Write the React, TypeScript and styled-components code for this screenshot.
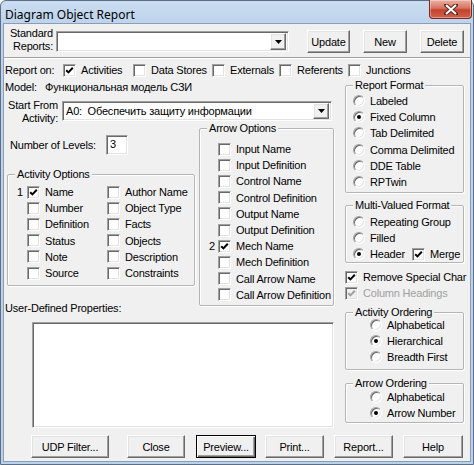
import React from "react";
import styled, { createGlobalStyle, css } from "styled-components";

const GlobalStyle = createGlobalStyle`
  body {
    margin: 0;
    background: #ffffff;
  }
  * {
    box-sizing: border-box;
  }
`;

const sunken = css`
  background: #ffffff;
  border: 1px solid;
  border-color: #a0a0a0 #ffffff #ffffff #a0a0a0;
  box-shadow: inset 1px 1px 0 #696969, inset -1px -1px 0 #e3e3e3;
`;

const raised = css`
  background: #f0f0f0;
  border: 1px solid;
  border-color: #ffffff #696969 #696969 #ffffff;
  box-shadow: inset -1px -1px 0 #a0a0a0, inset 1px 1px 0 #e3e3e3;
`;

const Window = styled.div`
  width: 474px;
  height: 465px;
  display: flex;
  flex-direction: column;
  padding: 0 3px 3px;
  border: 1px solid #5d6f86;
  border-radius: 6px 6px 0 0;
  background: linear-gradient(#cadcf0 0, #bdd3ec 24px, #b9d1ea 100%);
  font-family: "Liberation Sans", Arial, sans-serif;
  font-size: 11px;
  letter-spacing: -0.2px;
  color: #000000;
`;

const TitleBar = styled.div`
  height: 23px;
  display: flex;
  align-items: flex-start;
  justify-content: space-between;
`;

const Title = styled.div`
  padding: 5px 0 0 1px;
  font-family: "Noto Sans", "Liberation Sans", sans-serif;
  font-size: 12px;
  letter-spacing: 0;
`;

const CloseButton = styled.div`
  width: 43px;
  height: 19px;
  margin: -1px -2px 0 0;
  display: flex;
  align-items: center;
  justify-content: center;
  border: 1px solid #7a2a1f;
  border-top: none;
  border-radius: 0 0 4px 4px;
  background: linear-gradient(#eab0a4 0%, #d9735f 45%, #c4432d 55%, #d0624a 100%);
  box-shadow: inset 0 0 0 1px rgba(255, 255, 255, 0.35);
`;

const Client = styled.div`
  flex: 1;
  display: flex;
  flex-direction: column;
  background: #f0f0f0;
  box-shadow: 0 0 0 1px #8a9db5;
`;

const TopRow = styled.div`
  margin-top: 6px;
  height: 24px;
  display: flex;
  align-items: flex-start;
`;

const StackLabel = styled.div<{ $w: number }>`
  width: ${(p) => p.$w}px;
  text-align: right;
  line-height: 13px;
  margin-top: -3px;
`;

const Combo = styled.div<{ $w: number; $h: number }>`
  ${sunken};
  width: ${(p) => p.$w}px;
  height: ${(p) => p.$h}px;
  display: flex;
  align-items: center;
  justify-content: space-between;
  padding: 1px 2px 1px 3px;
  white-space: pre;
`;

const DropButton = styled.div`
  ${raised};
  width: 16px;
  height: 100%;
  display: flex;
  align-items: center;
  justify-content: center;
`;

const Button = styled.div<{ $w: number; $ml: number; $default?: boolean }>`
  ${raised};
  width: ${(p) => p.$w}px;
  height: 23px;
  margin-left: ${(p) => p.$ml}px;
  display: flex;
  align-items: center;
  justify-content: center;
  ${(p) =>
    p.$default &&
    css`
      border: 1px solid #000000;
      box-shadow: inset 1px 1px 0 #ffffff, inset -1px -1px 0 #696969,
        inset -2px -2px 0 #a0a0a0;
    `}
`;

const Separator = styled.div`
  margin-top: 3px;
  height: 2px;
  border-top: 1px solid #a0a0a0;
  border-bottom: 1px solid #ffffff;
`;

const ReportOnRow = styled.div`
  margin-top: 4px;
  height: 14px;
  display: flex;
  align-items: center;
`;

const RowLabel = styled.div<{ $w: number }>`
  width: ${(p) => p.$w}px;
  padding-left: 1px;
`;

const Item = styled.div<{ $w?: number; $disabled?: boolean }>`
  ${(p) => (p.$w ? `width: ${p.$w}px;` : "")}
  display: flex;
  align-items: center;
  white-space: nowrap;
  color: ${(p) => (p.$disabled ? "#a0a0a0" : "#000000")};
`;

const Mark = styled.span<{ $w: number }>`
  width: ${(p) => p.$w}px;
  flex: none;
`;

const Box = styled.span<{ $disabled?: boolean }>`
  ${sunken};
  width: 13px;
  height: 13px;
  flex: none;
  margin-right: 5px;
  display: flex;
  align-items: center;
  justify-content: center;
  ${(p) => p.$disabled && "background: #f0f0f0;"}
`;

const Round = styled.span`
  width: 12px;
  height: 12px;
  flex: none;
  margin-right: 5px;
  border-radius: 50%;
  border: 1px solid;
  border-color: #a0a0a0 #ffffff #ffffff #a0a0a0;
  background: #ffffff;
  box-shadow: inset 1px 1px 0 #696969, inset -1px -1px 0 #e3e3e3;
  display: flex;
  align-items: center;
  justify-content: center;
`;

const Dot = styled.span`
  width: 4px;
  height: 4px;
  border-radius: 50%;
  background: #000000;
`;

const Middle = styled.div`
  margin-top: 1px;
  display: grid;
  grid-template-columns: 341px 119px;
`;

const Column = styled.div`
  display: flex;
  flex-direction: column;
`;

const ModelRow = styled.div`
  margin-top: 2px;
  height: 13px;
  display: flex;
  align-items: center;
`;

const StartRow = styled.div`
  margin-top: 6px;
  height: 22px;
  display: flex;
  align-items: flex-start;
`;

const SubGrid = styled.div`
  margin-top: 1px;
  display: grid;
  grid-template-columns: 195px 135px;
  align-items: start;
`;

const LevelsRow = styled.div`
  margin-top: 13px;
  height: 20px;
  display: flex;
  align-items: center;
`;

const LevelsLabel = styled.div`
  width: 102px;
  padding-left: 6px;
`;

const NumberBox = styled.div`
  ${sunken};
  width: 22px;
  height: 20px;
  padding: 2px 0 0 3px;
`;

const Group = styled.div<{ $mt: number; $ml?: number; $w?: number; $h: number }>`
  position: relative;
  margin-top: ${(p) => p.$mt}px;
  margin-left: ${(p) => p.$ml ?? 0}px;
  width: ${(p) => (p.$w ? `${p.$w}px` : "auto")};
  height: ${(p) => p.$h}px;
  border: 1px solid #b5b5b5;
  border-radius: 2px;
  box-shadow: inset 1px 1px 0 #ffffff, 1px 1px 0 #ffffff;
`;

const Caption = styled.span`
  position: absolute;
  top: -7px;
  left: 7px;
  padding: 0 2px;
  line-height: 13px;
  background: #f0f0f0;
  white-space: nowrap;
`;

const Options = styled.div<{ $pt: number; $pl: number; $cols?: string }>`
  display: grid;
  grid-template-columns: ${(p) => p.$cols ?? "1fr"};
  grid-auto-rows: 16.2px;
  align-items: center;
  padding: ${(p) => p.$pt}px 0 0 ${(p) => p.$pl}px;
`;

const UdpLabel = styled.div`
  margin-top: 16px;
  padding-left: 1px;
  line-height: 13px;
`;

const PropsBox = styled.div`
  ${sunken};
  margin: 7px 0 0 28px;
  width: 302px;
  height: 106px;
`;

const PlainRow = styled.div<{ $mt: number }>`
  margin-top: ${(p) => p.$mt}px;
  height: 14px;
  display: flex;
  align-items: center;
`;

const ButtonRow = styled.div`
  margin-top: 7px;
  display: flex;
`;

function Tick({ color = "#000000" }: { color?: string }) {
  return (
    <svg width="9" height="9" viewBox="0 0 9 9">
      <polyline points="1.2,4.2 3.4,6.4 7.8,1.8" fill="none" stroke={color} strokeWidth="2" />
    </svg>
  );
}

function Check({ label, checked, mark, markW = 0, w, disabled }: {
  label: string;
  checked?: boolean;
  mark?: string;
  markW?: number;
  w?: number;
  disabled?: boolean;
}) {
  return (
    <Item $w={w} $disabled={disabled}>
      {markW > 0 && <Mark $w={markW}>{mark}</Mark>}
      <Box $disabled={disabled}>{checked && <Tick color={disabled ? "#a0a0a0" : "#000000"} />}</Box>
      {label}
    </Item>
  );
}

function Radio({ label, on, w }: { label: string; on?: boolean; w?: number }) {
  return (
    <Item $w={w}>
      <Round>{on && <Dot />}</Round>
      {label}
    </Item>
  );
}

function Arrow() {
  return (
    <svg width="7" height="4" viewBox="0 0 7 4">
      <polygon points="0,0 7,0 3.5,4" fill="#000000" />
    </svg>
  );
}

const activityLeft = ["Name", "Number", "Definition", "Status", "Note", "Source"];
const activityRight = ["Author Name", "Object Type", "Facts", "Objects", "Description", "Constraints"];
const arrowOptions = [
  "Input Name",
  "Input Definition",
  "Control Name",
  "Control Definition",
  "Output Name",
  "Output Definition",
  "Mech Name",
  "Mech Definition",
  "Call Arrow Name",
  "Call Arrow Definition",
];
const formats = ["Labeled", "Fixed Column", "Tab Delimited", "Comma Delimited", "DDE Table", "RPTwin"];

export default function App() {
  return (
    <>
      <GlobalStyle />
      <Window>
        <TitleBar>
          <Title>Diagram Object Report</Title>
          <CloseButton>
            <svg width="14" height="11" viewBox="0 0 14 11">
              <path
                d="M2 1 L12 10 M12 1 L2 10"
                stroke="#5a2a22"
                strokeWidth="4"
                strokeLinecap="square"
              />
              <path d="M2 1 L12 10 M12 1 L2 10" stroke="#ffffff" strokeWidth="2" />
            </svg>
          </CloseButton>
        </TitleBar>
        <Client>
          <TopRow>
            <StackLabel $w={49}>
              Standard
              <br />
              Reports:
            </StackLabel>
            <Combo $w={233} $h={21} style={{ marginLeft: 3, marginTop: 1 }}>
              <span />
              <DropButton>
                <Arrow />
              </DropButton>
            </Combo>
            <Button $w={43} $ml={18}>Update</Button>
            <Button $w={44} $ml={13}>New</Button>
            <Button $w={44} $ml={13}>Delete</Button>
          </TopRow>
          <Separator />
          <ReportOnRow>
            <RowLabel $w={59}>Report on:</RowLabel>
            <Check label="Activities" checked w={70} />
            <Check label="Data Stores" w={79} />
            <Check label="Externals" w={67} />
            <Check label="Referents" w={69} />
            <Check label="Junctions" />
          </ReportOnRow>
          <Middle>
            <Column>
              <ModelRow>
                <RowLabel $w={41}>Model:</RowLabel>
                <span>Функциональная модель СЗИ</span>
              </ModelRow>
              <StartRow>
                <StackLabel $w={54} style={{ marginTop: 0 }}>
                  Start From
                  <br />
                  Activity:
                </StackLabel>
                <Combo $w={270} $h={20} style={{ marginLeft: 4, marginTop: 2 }}>
                  <span>A0:  Обеспечить защиту информации</span>
                  <DropButton>
                    <Arrow />
                  </DropButton>
                </Combo>
              </StartRow>
              <SubGrid>
                <Column>
                  <LevelsRow>
                    <LevelsLabel>Number of Levels:</LevelsLabel>
                    <NumberBox>3</NumberBox>
                  </LevelsRow>
                  <Group $mt={19} $ml={3} $w={188} $h={112}>
                    <Caption>Activity Options</Caption>
                    <Options $pt={9} $pl={9} $cols="80px 80px">
                      {activityLeft.map((l, i) => (
                        <React.Fragment key={l}>
                          <Check label={l} checked={i === 0} mark={i === 0 ? "1" : ""} markW={10} />
                          <Check label={activityRight[i]} markW={10} />
                        </React.Fragment>
                      ))}
                    </Options>
                  </Group>
                  <UdpLabel>User-Defined Properties:</UdpLabel>
                </Column>
                <Group $mt={6} $w={135} $h={178}>
                  <Caption>Arrow Options</Caption>
                  <Options $pt={12} $pl={9}>
                    {arrowOptions.map((l) => (
                      <Check
                        key={l}
                        label={l}
                        checked={l === "Mech Name"}
                        mark={l === "Mech Name" ? "2" : ""}
                        markW={9}
                      />
                    ))}
                  </Options>
                </Group>
              </SubGrid>
              <PropsBox />
            </Column>
            <Column>
              <Group $mt={7} $h={108}>
                <Caption>Report Format</Caption>
                <Options $pt={7} $pl={7}>
                  {formats.map((f) => (
                    <Radio key={f} label={f} on={f === "Fixed Column"} />
                  ))}
                </Options>
              </Group>
              <Group $mt={12} $h={58}>
                <Caption>Multi-Valued Format</Caption>
                <Options $pt={8} $pl={7}>
                  <Radio label="Repeating Group" />
                  <Radio label="Filled" />
                  <Item>
                    <Radio label="Header" on w={59} />
                    <Check label="Merge" checked />
                  </Item>
                </Options>
              </Group>
              <PlainRow $mt={7}>
                <Check label="Remove Special Char" checked />
              </PlainRow>
              <PlainRow $mt={2}>
                <Check label="Column Headings" checked disabled />
              </PlainRow>
              <Group $mt={12} $h={58}>
                <Caption>Activity Ordering</Caption>
                <Options $pt={4} $pl={24}>
                  <Radio label="Alphabetical" />
                  <Radio label="Hierarchical" on />
                  <Radio label="Breadth First" />
                </Options>
              </Group>
              <Group $mt={13} $h={40}>
                <Caption>Arrow Ordering</Caption>
                <Options $pt={5} $pl={24}>
                  <Radio label="Alphabetical" />
                  <Radio label="Arrow Number" on />
                </Options>
              </Group>
            </Column>
          </Middle>
          <ButtonRow>
            <Button $w={78} $ml={27}>UDP Filter...</Button>
            <Button $w={58} $ml={18}>Close</Button>
            <Button $w={60} $ml={11} $default>Preview...</Button>
            <Button $w={59} $ml={9}>Print...</Button>
            <Button $w={59} $ml={10}>Report...</Button>
            <Button $w={60} $ml={10}>Help</Button>
          </ButtonRow>
        </Client>
      </Window>
    </>
  );
}
